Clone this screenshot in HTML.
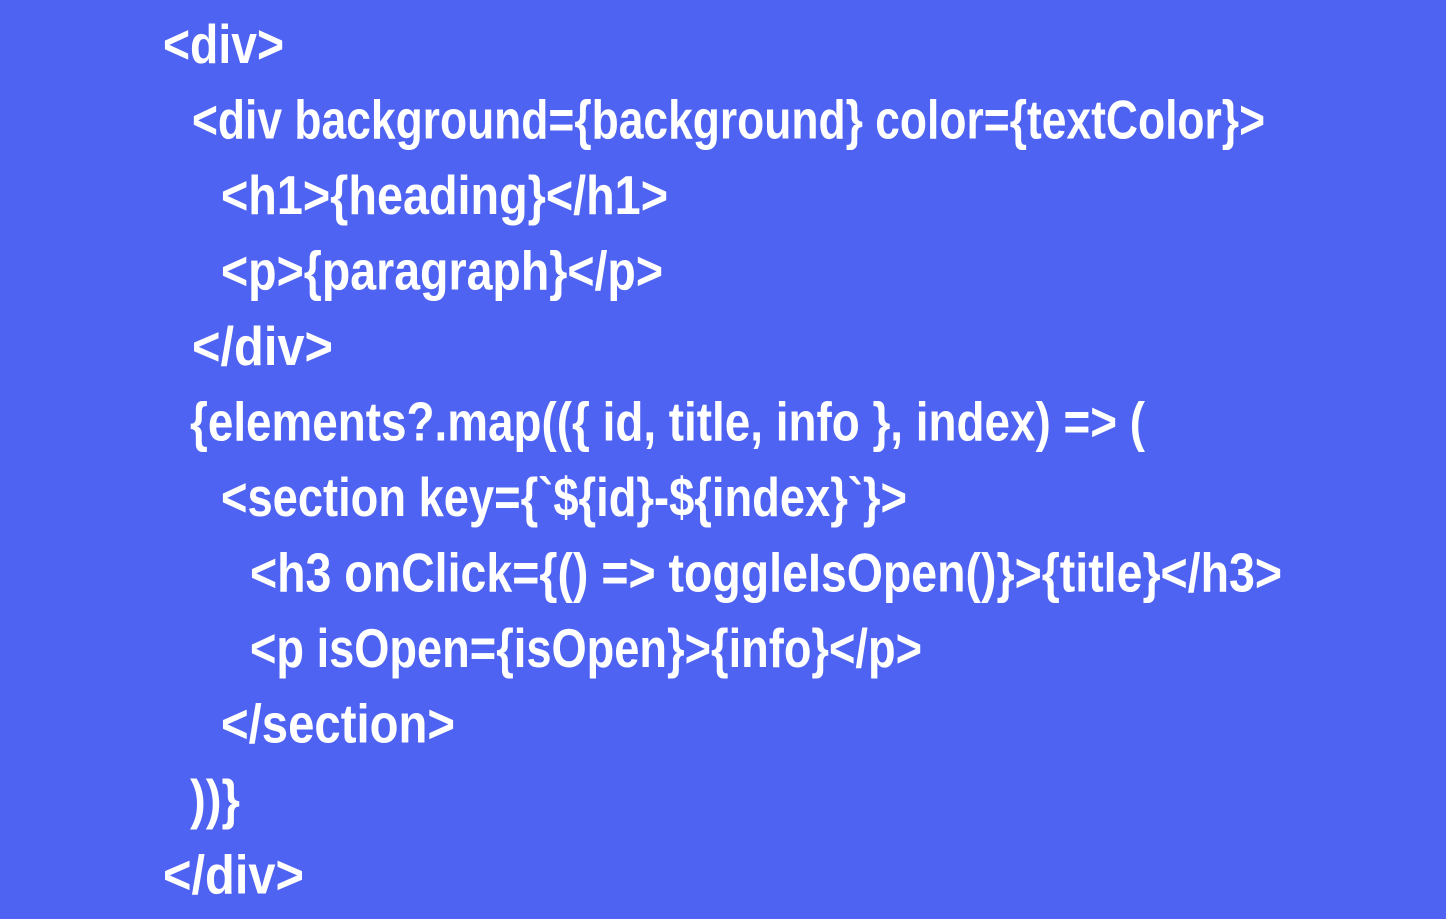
<!DOCTYPE html>
<html><head><meta charset="utf-8"><style>
html,body{margin:0;padding:0;background:#4f63f2;overflow:hidden}
svg{display:block}
text{font-family:"Liberation Sans",sans-serif;font-weight:bold;font-size:55px;fill:#fff}
</style></head><body>
<svg width="1446" height="919" viewBox="0 0 1446 919" xmlns="http://www.w3.org/2000/svg">
<rect width="1446" height="919" fill="#4f63f2"/>
<text x="163" y="63" textLength="121" lengthAdjust="spacingAndGlyphs">&lt;div&gt;</text>
<text x="192" y="138.5" textLength="1073" lengthAdjust="spacingAndGlyphs">&lt;div background={background} color={textColor}&gt;</text>
<text x="221" y="214" textLength="447" lengthAdjust="spacingAndGlyphs">&lt;h1&gt;{heading}&lt;/h1&gt;</text>
<text x="221" y="289.5" textLength="442" lengthAdjust="spacingAndGlyphs">&lt;p&gt;{paragraph}&lt;/p&gt;</text>
<text x="192" y="365" textLength="141" lengthAdjust="spacingAndGlyphs">&lt;/div&gt;</text>
<text x="190" y="440.5" textLength="955" lengthAdjust="spacingAndGlyphs">{elements?.map(({ id, title, info }, index) =&gt; (</text>
<text x="221" y="516" textLength="686" lengthAdjust="spacingAndGlyphs">&lt;section key={`${id}-${index}`}&gt;</text>
<text x="250" y="591.5" textLength="1032" lengthAdjust="spacingAndGlyphs">&lt;h3 onClick={() =&gt; toggleIsOpen()}&gt;{title}&lt;/h3&gt;</text>
<text x="250" y="667" textLength="672" lengthAdjust="spacingAndGlyphs">&lt;p isOpen={isOpen}&gt;{info}&lt;/p&gt;</text>
<text x="221" y="742.5" textLength="234" lengthAdjust="spacingAndGlyphs">&lt;/section&gt;</text>
<text x="190" y="818" textLength="50" lengthAdjust="spacingAndGlyphs">))}</text>
<text x="163" y="893.5" textLength="141" lengthAdjust="spacingAndGlyphs">&lt;/div&gt;</text>
</svg>
</body></html>
